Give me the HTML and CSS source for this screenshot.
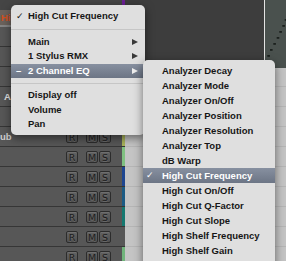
FILE: index.html
```html
<!DOCTYPE html>
<html lang="en">
<head>
  <meta charset="UTF-8">
  <title>Automation parameter menu</title>
  <link rel="stylesheet" href="styles.css">
</head>
<body>

<div class="screen">
  <div class="tracks">
    <div class="row top-row">
      <div class="name"></div>
      <div class="strip purple"></div>
      <div class="lane"></div>
    </div>
    <div class="row head-row">
      <div class="name"><span class="param">Hi</span></div>
      <div class="strip purple"></div>
      <div class="lane"></div>
    </div>

    <div class="row"><div class="name"></div><div class="strip"></div><div class="lane"></div></div>
    <div class="row"><div class="name"></div><div class="strip"></div><div class="lane"></div></div>
    <div class="row"><div class="name"></div><div class="strip"></div><div class="lane"></div></div>
    <div class="row">
      <div class="name"><span class="title">A</span></div>
      <div class="strip"></div><div class="lane"></div>
    </div>
    <div class="row"><div class="name"></div><div class="strip"></div><div class="lane"></div></div>
    <div class="row">
      <div class="name"><span class="title cut">ub</span>
        <div class="rms"><span class="btn btn-r">R</span><span class="btn btn-m">M</span><span class="btn">S</span></div>
      </div>
      <div class="strip olive"></div><div class="lane"></div>
    </div>
    <div class="row">
      <div class="name"><div class="rms"><span class="btn btn-r">R</span><span class="btn btn-m">M</span><span class="btn">S</span></div></div>
      <div class="strip green"></div><div class="lane"></div>
    </div>
    <div class="row">
      <div class="name"><div class="rms"><span class="btn btn-r">R</span><span class="btn btn-m">M</span><span class="btn">S</span></div></div>
      <div class="strip blue"></div><div class="lane"></div>
    </div>
    <div class="row">
      <div class="name"><div class="rms"><span class="btn btn-r">R</span><span class="btn btn-m">M</span><span class="btn">S</span></div></div>
      <div class="strip sea"></div><div class="lane"></div>
    </div>
    <div class="row">
      <div class="name"><div class="rms"><span class="btn btn-r">R</span><span class="btn btn-m">M</span><span class="btn">S</span></div></div>
      <div class="strip teal"></div><div class="lane"></div>
    </div>
    <div class="row">
      <div class="name"><div class="rms"><span class="btn btn-r">R</span><span class="btn btn-m">M</span><span class="btn">S</span></div></div>
      <div class="strip"></div><div class="lane"></div>
    </div>
    <div class="row">
      <div class="name"><div class="rms"><span class="btn btn-r">R</span><span class="btn btn-m">M</span><span class="btn">S</span></div></div>
      <div class="strip mint"></div><div class="lane"></div>
    </div>
  </div>

  <!-- plugin window behind the menus -->
  <div class="plugin">
    <div class="plugin-body"></div>
    <div class="plugin-line"></div>
    <div class="graph">
      <svg width="21" height="68" viewBox="0 0 21 68">
        <g fill="#1b201d">
          <rect x="2.3" y="55" width="2.6" height="1.8"/>
          <rect x="5" y="49" width="2.6" height="1.8"/>
          <rect x="8.3" y="43" width="2.6" height="1.8"/>
          <rect x="11.7" y="37" width="2.6" height="1.8"/>
          <rect x="14.3" y="31" width="2.6" height="1.8"/>
          <rect x="17.3" y="25" width="2.6" height="1.8"/>
          <rect x="19.7" y="19" width="2.6" height="1.8"/>
        </g>
      </svg>
    </div>
  </div>

  <div class="menu main-menu">
    <div class="item"><span class="mark">✓</span>High Cut Frequency</div>
    <div class="sep"></div>
    <div class="item"><span class="mark"></span>Main<span class="arrow"></span></div>
    <div class="item"><span class="mark"></span>1 Stylus RMX<span class="arrow"></span></div>
    <div class="item on"><span class="mark dash">–</span>2 Channel EQ<span class="arrow"></span></div>
    <div class="sep low"></div>
    <div class="item"><span class="mark"></span>Display off</div>
    <div class="item"><span class="mark"></span>Volume</div>
    <div class="item"><span class="mark"></span>Pan</div>
  </div>

  <div class="menu sub-menu">
    <div class="item"><span class="mark"></span>Analyzer Decay</div>
    <div class="item"><span class="mark"></span>Analyzer Mode</div>
    <div class="item"><span class="mark"></span>Analyzer On/Off</div>
    <div class="item"><span class="mark"></span>Analyzer Position</div>
    <div class="item"><span class="mark"></span>Analyzer Resolution</div>
    <div class="item"><span class="mark"></span>Analyzer Top</div>
    <div class="item"><span class="mark"></span>dB Warp</div>
    <div class="item on"><span class="mark">✓</span>High Cut Frequency</div>
    <div class="item"><span class="mark"></span>High Cut On/Off</div>
    <div class="item"><span class="mark"></span>High Cut Q-Factor</div>
    <div class="item"><span class="mark"></span>High Cut Slope</div>
    <div class="item"><span class="mark"></span>High Shelf Frequency</div>
    <div class="item"><span class="mark"></span>High Shelf Gain</div>
  </div>
</div>

</body>
</html>
```

FILE: styles.css
```css
* {
  box-sizing: border-box;
}

body {
  margin: 0;
  overflow: hidden;
  font-family: "Liberation Sans", Arial, sans-serif;
  background: #c4c4c4;
}

.screen {
  position: relative;
  width: 286px;
  height: 261px;
  overflow: hidden;
}

/* track list */

.tracks {
  display: flex;
  flex-direction: column;
}

.row {
  display: grid;
  grid-template-columns: 122px 3px 1fr;
  height: 20px;
  flex: none;
}

.name {
  display: flex;
  align-items: center;
  background: #575757;
  border-bottom: 1px solid #363636;
  overflow: hidden;
  white-space: nowrap;
}

.strip {
  background: #575757;
  border-bottom: 1px solid #363636;
}

.lane {
  background: #c4c4c4;
  border-bottom: 1px solid #b5b5b5;
}

.top-row {
  height: 10px;
}

.top-row .name,
.top-row .lane {
  background: #454545;
  border: none;
}

.head-row {
  height: 17px;
}

.head-row .name {
  background: #6b625c;
  border-bottom: 2px solid #858585;
}

.head-row .lane {
  background: #3d3d3d;
}

.param {
  padding-left: 1px;
  font-size: 9.5px;
  font-weight: bold;
  color: #d5501f;
}

.title {
  padding-left: 4px;
  font-size: 9.5px;
  font-weight: bold;
  color: #e4e4e4;
}

.title.cut {
  padding-left: 0;
  color: #cfcfcf;
}

.purple { background: #6b1f95; border: none; }
.olive { background: #a9b35a; }
.green { background: #80c181; }
.blue { background: #1e4690; }
.sea { background: #1c5b84; }
.teal { background: #157870; }
.mint { background: #70b47b; }

.rms {
  display: flex;
  align-self: flex-start;
  margin: 4px 11px 0 auto;
}

.btn {
  display: flex;
  align-items: center;
  justify-content: center;
  width: 12px;
  height: 12px;
  border: 1px solid #2c2c2c;
  border-radius: 2px;
  background: linear-gradient(#616161, #515151);
  box-shadow: inset 0 1px 0 #6e6e6e;
  font-family: "DejaVu Sans", sans-serif;
  font-size: 9.5px;
  color: #1c1c1c;
  text-shadow: 0 1px 0 #6c6c6c;
}

.btn-r {
  margin-right: 8px;
}

.btn-m {
  margin-right: 1px;
}

/* plugin window */

.plugin {
  position: absolute;
  left: 125px;
  top: 0;
  width: 161px;
  height: 68px;
  display: flex;
}

.plugin-body {
  flex: 1;
  background: #3d3d3d;
}

.plugin-line {
  width: 1px;
  background: #e4e4e4;
}

.graph {
  width: 21px;
  background: #4a514e;
}

.graph svg {
  display: block;
}

/* popup menus */

.menu {
  position: absolute;
  background: #dfdfdf;
  border-radius: 5px;
  box-shadow: 0 3px 10px rgba(0, 0, 0, 0.5);
  font-size: 9.5px;
  font-weight: bold;
  color: #161616;
}

.main-menu {
  left: 11px;
  top: 5px;
  width: 134px;
  padding: 4px 0 3.5px;
}

.sub-menu {
  left: 143px;
  top: 60px;
  width: 132px;
  height: 210px;
  padding-top: 3px;
  border-radius: 5px 5px 0 0;
}

.item {
  display: flex;
  align-items: center;
  height: 14.5px;
  line-height: 14.5px;
  white-space: nowrap;
}

.sub-menu .item {
  height: 15px;
  line-height: 15px;
}

.mark {
  width: 12px;
  margin-left: 5px;
  font-family: "DejaVu Sans", sans-serif;
  font-size: 9px;
}

.mark.dash {
  font-family: "Liberation Sans", Arial, sans-serif;
  font-size: 9.5px;
}

.sub-menu .mark {
  width: 16px;
  margin-left: 3px;
}

.arrow {
  margin: 0 7px 0 auto;
  border-left: 6px solid #3a3a3a;
  border-top: 3.5px solid transparent;
  border-bottom: 3.5px solid transparent;
}

.item.on {
  background: linear-gradient(#8790a0, #6c7585);
  color: #fff;
}

.item.on .arrow {
  border-left-color: #eeeeee;
}

.sep {
  height: 1px;
  margin: 5px 0;
  background: #c6c6c6;
}

.sep.low {
  margin: 4.5px 0;
}
```
